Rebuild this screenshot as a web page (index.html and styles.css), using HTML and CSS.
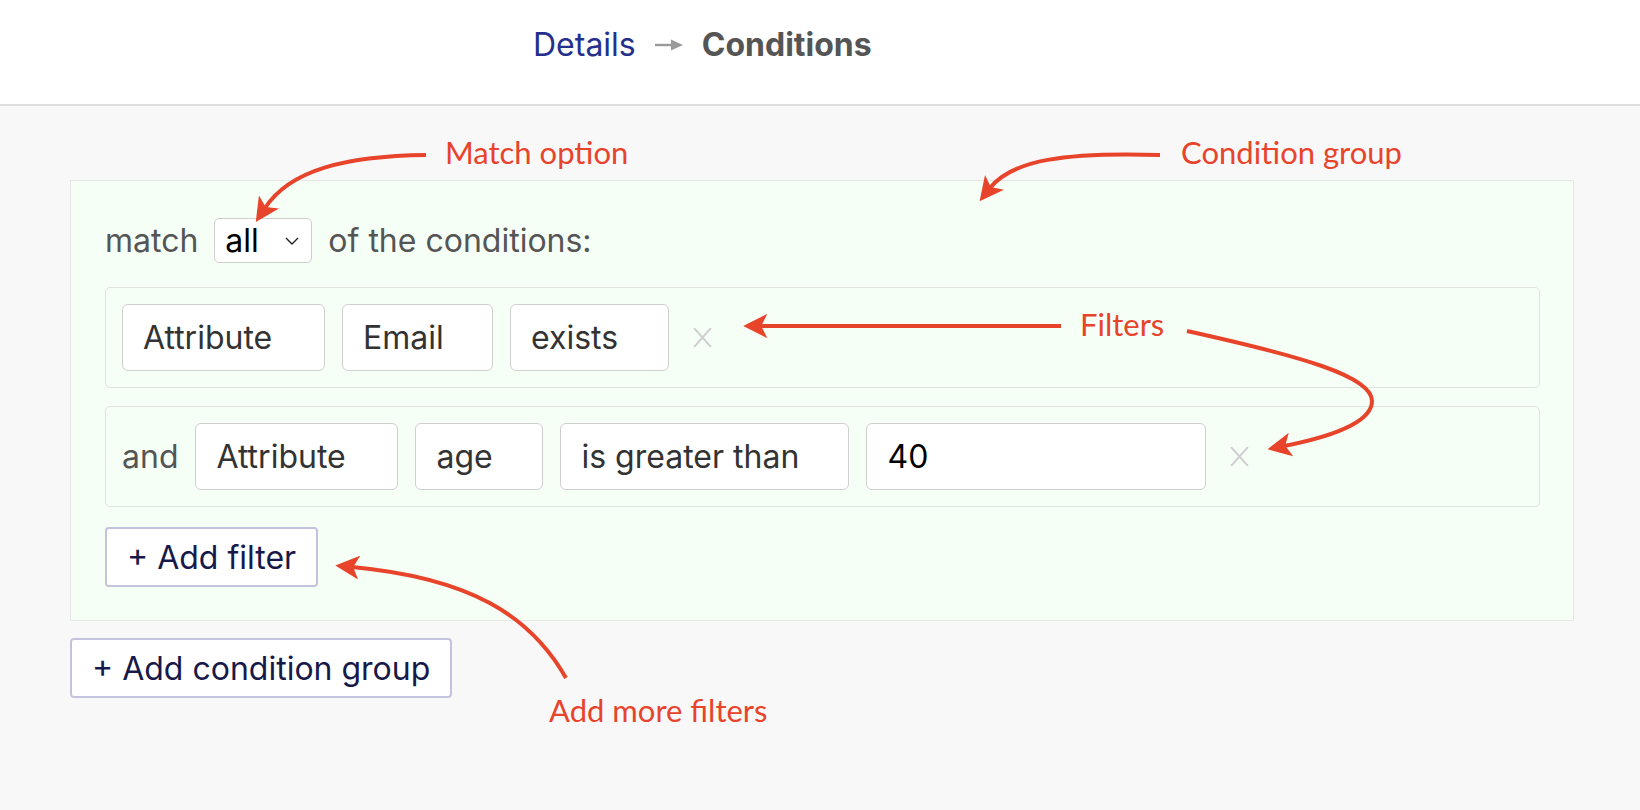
FILE: index.html
```html
<!DOCTYPE html>
<html lang="en">
<head>
<meta charset="utf-8">
<title>Conditions</title>
<link rel="stylesheet" href="styles.css">
</head>
<body>
<header class="topbar">
  <nav class="crumbs">
    <span class="crumb-link">Details</span>
    <svg class="crumb-arrow" viewBox="0 0 28 14" width="28" height="14"><path d="M0 7 H18" stroke="#9a9a9a" stroke-width="2.4"/><path d="M16 1.5 L28 7 L16 12.5 Z" fill="#9a9a9a"/></svg>
    <span class="crumb-current">Conditions</span>
  </nav>
</header>

<main class="content">
  <section class="group">
    <div class="match-row">
      <span class="label">match</span>
      <div class="select">
        <span>all</span>
        <svg class="chev" viewBox="0 0 14 8" width="14" height="8"><path d="M1 1 L7 7 L13 1" fill="none" stroke="#222" stroke-width="1.4"/></svg>
      </div>
      <span class="label">of the conditions:</span>
    </div>

    <div class="filter">
      <div class="field w-attr">Attribute</div>
      <div class="field w-email">Email</div>
      <div class="field w-exists">exists</div>
      <svg class="remove" viewBox="0 0 20 22" width="21" height="23"><path d="M2 2 L18 20 M18 2 L2 20" stroke="#cfcfcf" stroke-width="2" fill="none"/></svg>
    </div>

    <div class="filter">
      <span class="label and">and</span>
      <div class="field w-attr">Attribute</div>
      <div class="field w-age">age</div>
      <div class="field w-op">is greater than</div>
      <div class="field value w-val">40</div>
      <svg class="remove" viewBox="0 0 20 22" width="21" height="23"><path d="M2 2 L18 20 M18 2 L2 20" stroke="#cfcfcf" stroke-width="2" fill="none"/></svg>
    </div>

    <button class="btn">+ Add filter</button>
  </section>

  <button class="btn btn-group">+ Add condition group</button>
</main>

<svg class="notes" width="1640" height="810" viewBox="0 0 1640 810">
  <defs>
    <marker id="head" viewBox="0 0 10 10" refX="3" refY="5" markerWidth="6" markerHeight="6" markerUnits="strokeWidth" orient="auto">
      <path d="M0 0 L10 5 L0 10 L2.5 5 Z" fill="#e8432b"/>
    </marker>
  </defs>
  <g fill="none" stroke="#e8432b" stroke-width="4" stroke-linecap="butt">
    <path d="M426 155 C345 156 290 170 265 208" marker-end="url(#head)"/>
    <path d="M1160 155 C1065 152 1012 160 990 188" marker-end="url(#head)"/>
    <path d="M1061 326 L760 326" marker-end="url(#head)"/>
    <path d="M1187 331 C1300 356 1372 376 1372 401 C1372 424 1325 438 1284 446" marker-end="url(#head)"/>
    <path d="M566 678 C530 615 470 578 352 567" marker-end="url(#head)"/>
  </g>
  <g class="note-text">
    <text x="445" y="164">Match option</text>
    <text x="1181" y="164">Condition group</text>
    <text x="1080" y="336">Filters</text>
    <text x="549" y="722">Add more filters</text>
  </g>
</svg>
</body>
</html>
```

FILE: styles.css
```css
* { box-sizing: border-box; }

html, body {
  margin: 0;
  padding: 0;
}

body {
  position: relative;
  width: 1640px;
  height: 810px;
  overflow: hidden;
  background: #f8f8f8;
  font-family: Inter, "Liberation Sans", sans-serif;
  font-size: 32px;
  color: #333;
}

.topbar {
  height: 106px;
  background: #fff;
  border-bottom: 2px solid #dedede;
  display: flex;
  align-items: center;
  padding-left: 533px;
  padding-bottom: 16px;
}

.crumbs {
  display: flex;
  align-items: center;
  gap: 19px;
}

.crumb-link { color: #25308d; }
.crumb-arrow { display: block; margin-top: 2px; }
.crumb-current { color: #555; font-weight: 700; }

.content {
  padding: 74px 0 0 70px;
}

.group {
  width: 1504px;
  background: #f5fff5;
  border: 1px solid #e6e8e6;
  padding: 37px 33px 33px 34px;
  display: flex;
  flex-direction: column;
  align-items: flex-start;
}

.match-row {
  display: flex;
  align-items: center;
  height: 45px;
  gap: 16px;
  margin-bottom: 24px;
}

.label { color: #555; }

.select {
  width: 98px;
  height: 45px;
  background: #fff;
  border: 1.5px solid #cfcfcf;
  border-radius: 5px;
  display: flex;
  align-items: center;
  justify-content: space-between;
  padding: 0 12px 0 10px;
  color: #000;
}

.chev { display: block; }

.filter {
  width: 100%;
  height: 101px;
  border: 1.5px solid #e1e3e1;
  border-radius: 5px;
  display: flex;
  align-items: center;
  gap: 17px;
  padding: 0 16px;
  margin-bottom: 18px;
}

.filter + .filter + .btn { margin-top: 2px; }

.field {
  height: 67px;
  background: #fff;
  border: 1.5px solid #cfcfcf;
  border-radius: 6px;
  display: flex;
  align-items: center;
  padding-left: 20px;
  color: #333;
  white-space: nowrap;
}

.value { color: #000; }

.w-attr { width: 203px; }
.w-email { width: 151px; }
.w-exists { width: 159px; }
.w-age { width: 128px; }
.w-op { width: 289px; }
.w-val { width: 340px; }

.remove { margin-left: 6px; display: block; }

.btn {
  font-family: inherit;
  font-size: 32px;
  color: #17194a;
  background: #fff;
  border: 2px solid #c3c3de;
  border-radius: 4px;
  height: 60px;
  padding: 0 20px;
  margin: 0;
  cursor: pointer;
}

.btn-group { margin-top: 17px; }

.notes {
  position: absolute;
  left: 0;
  top: 0;
  pointer-events: none;
}

.note-text {
  font-family: Lato, "Open Sans", sans-serif;
  font-size: 31px;
  fill: #e8432b;
}
```
